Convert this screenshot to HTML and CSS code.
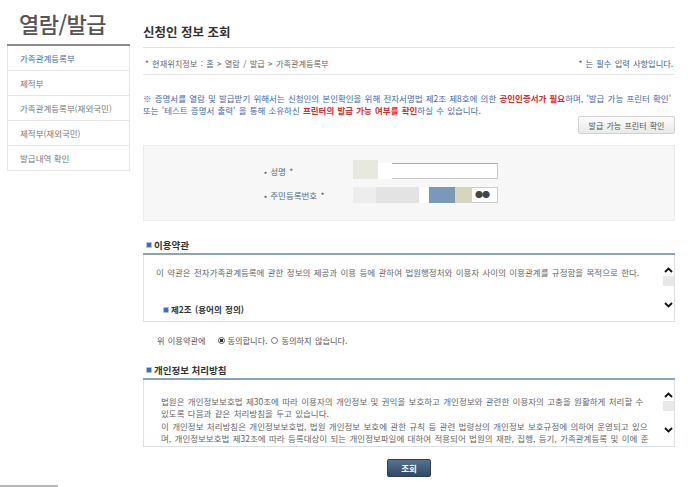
FILE: index.html
```html
<!DOCTYPE html>
<html lang="ko">
<head>
    <meta charset="UTF-8">
    <title>신청인 정보 조회</title>
    <link rel="stylesheet" href="styles.css">
</head>
<body>
<div class="page">
    <aside class="side">
        <h1 class="side-title">열람/발급</h1>
        <ul class="side-menu">
            <li class="on">가족관계등록부</li>
            <li>제적부</li>
            <li>가족관계등록부(재외국민)</li>
            <li>제적부(재외국민)</li>
            <li>발급내역 확인</li>
        </ul>
        <div class="side-foot"></div>
    </aside>

    <main class="content">
        <h2 class="page-title">신청인 정보 조회</h2>
        <div class="location">
            <span>* 현재위치정보 : 홈 &gt; 열람 / 발급 &gt; 가족관계등록부</span>
            <span class="req">* 는 필수 입력 사항입니다.</span>
        </div>

        <p class="notice">※ 증명서를 열람 및 발급받기 위해서는 신청인의 본인확인을 위해 전자서명법 제2조 제8호에 의한 <b>공인인증서가 필요</b>하며, '발급 가능 프린터 확인'<br>또는 '테스트 증명서 출력' 을 통해 소유하신 <b>프린터의 발급 가능 여부를 확인</b>하실 수 있습니다.</p>
        <div class="btn-row">
            <button class="btn-light" type="button">발급 가능 프린터 확인</button>
        </div>

        <div class="form-box">
            <div class="form-row">
                <label class="form-label">• 성명 *</label>
                <div class="field">
                    <span class="mask mask-green"></span>
                    <span class="mask mask-white"></span>
                    <span class="name-input"></span>
                </div>
            </div>
            <div class="form-row">
                <label class="form-label">• 주민등록번호 *</label>
                <div class="field">
                    <span class="mask mask-a"></span>
                    <span class="mask mask-b"></span>
                    <span class="mask mask-gap"></span>
                    <span class="mask mask-blue"></span>
                    <span class="mask mask-beige"></span>
                    <span class="pw-dots">●●</span>
                </div>
            </div>
        </div>

        <h3 class="sec-title"><span class="sec-icon"></span>이용약관</h3>
        <div class="scroll-box">
            <div class="scroll-text terms-one">
                <p>이 약관은 전자가족관계등록에 관한 정보의 제공과 이용 등에 관하여 법원행정처와 이용자 사이의 이용관계를 규정함을 목적으로 한다.</p>
                <h4 class="article"><span class="sec-icon small"></span>제2조 (용어의 정의)</h4>
            </div>
            <div class="scrollbar">
                <svg width="9" height="6" viewBox="0 0 9 6"><polyline points="1,5 4.5,1.5 8,5" fill="none" stroke="#111" stroke-width="1.9"/></svg>
                <span class="thumb"></span>
                <svg class="down" width="9" height="6" viewBox="0 0 9 6"><polyline points="1,1 4.5,4.5 8,1" fill="none" stroke="#111" stroke-width="1.9"/></svg>
            </div>
        </div>

        <div class="agree">
            <span class="agree-label">위 이용약관에</span>
            <span class="radio checked"></span><span>동의합니다.</span>
            <span class="radio"></span><span>동의하지 않습니다.</span>
        </div>

        <h3 class="sec-title"><span class="sec-icon"></span>개인정보 처리방침</h3>
        <div class="scroll-box">
            <div class="scroll-text terms-two">
                <p>법원은 개인정보보호법 제30조에 따라 이용자의 개인정보 및 권익을 보호하고 개인정보와 관련한 이용자의 고충을 원활하게 처리할 수<br>있도록 다음과 같은 처리방침을 두고 있습니다.<br>이 개인정보 처리방침은 개인정보보호법, 법원 개인정보 보호에 관한 규칙 등 관련 법령상의 개인정보 보호규정에 의하여 운영되고 있으<br>며, 개인정보보호법 제32조에 따라 등록대상이 되는 개인정보파일에 대하여 적용되어 법원의 재판, 집행, 등기, 가족관계등록 및 이에 준</p>
            </div>
            <div class="scrollbar">
                <svg width="9" height="6" viewBox="0 0 9 6"><polyline points="1,5 4.5,1.5 8,5" fill="none" stroke="#111" stroke-width="1.9"/></svg>
                <span class="thumb"></span>
                <svg class="down" width="9" height="6" viewBox="0 0 9 6"><polyline points="1,1 4.5,4.5 8,1" fill="none" stroke="#111" stroke-width="1.9"/></svg>
            </div>
        </div>

        <div class="submit-row">
            <button class="btn-dark" type="button">조회</button>
        </div>
    </main>
</div>
</body>
</html>
```

FILE: styles.css
```css
body {
    margin: 0;
    background-color: #fff;
    font-family: "Noto Sans CJK KR", "Noto Sans", sans-serif;
    font-size: 8.5px;
    color: #666;
}
.page {
    display: flex;
    height: 487px;
    overflow: hidden;
}

/* left menu */
.side {
    width: 143px;
    display: flex;
    flex-direction: column;
}
.side-title {
    margin: 0 0 0 7px;
    width: 123px;
    height: 46px;
    padding-top: 12px;
    padding-left: 12px;
    box-sizing: border-box;
    font-size: 22px;
    font-weight: 500;
    line-height: 22px;
    letter-spacing: -0.5px;
    color: #555;
    border-bottom: 2px solid #8c8c8c;
}
.side-menu {
    list-style: none;
    margin: 0 0 0 7px;
    padding: 0;
    width: 123px;
    border: 1px solid #e6e6e6;
    border-top: none;
    box-sizing: border-box;
}
.side-menu li {
    height: 24px;
    line-height: 25px;
    padding-left: 12px;
    border-bottom: 1px solid #e6e6e6;
    font-size: 8.5px;
    color: #777;
}
.side-menu li:last-child {
    border-bottom: none;
}
.side-menu li.on {
    color: #3c6aa8;
}
.side-foot {
    margin-top: auto;
    width: 58px;
    height: 2px;
    background-color: #b8b8b8;
}

/* content */
.content {
    width: 532px;
}
.page-title {
    margin: 0;
    padding-top: 24px;
    height: 23px;
    font-size: 12.5px;
    line-height: 16px;
    color: #333;
    border-bottom: 1px solid #e2e2e2;
}
.location {
    display: flex;
    justify-content: space-between;
    height: 27px;
    padding: 10px 2px 0;
    box-sizing: border-box;
    line-height: 11px;
    font-size: 8.2px;
    word-spacing: 1px;
    color: #666;
    border-bottom: 1px solid #e5e5e5;
}
.location .req {
    color: #3e5f8a;
}
.notice {
    margin: 18px 0 0;
    line-height: 11.5px;
    word-spacing: 0.8px;
    color: #3d67b5;
    white-space: nowrap;
}
.notice b {
    color: #e5262b;
}
.btn-row {
    display: flex;
    justify-content: flex-end;
}
.btn-light {
    width: 97px;
    height: 18px;
    padding: 0;
    font-family: inherit;
    font-size: 8px;
    word-spacing: 1px;
    color: #555;
    background: linear-gradient(#fcfcfc, #e9e9e9);
    border: 1px solid #d2d2d2;
    border-radius: 2px;
}

/* form */
.form-box {
    margin-top: 11px;
    padding: 17px 0;
    background-color: #f7f7f7;
    border: 1px solid #ececec;
    display: flex;
    flex-direction: column;
    gap: 8px;
}
.form-row {
    display: flex;
    align-items: center;
    height: 16px;
}
.form-label {
    width: 89px;
    margin-left: 120px;
    color: #4d6b8a;
    word-spacing: 1px;
}
.field {
    display: flex;
    height: 16px;
    width: 145px;
}
.mask {
    height: 100%;
}
.mask-green {
    width: 25px;
    height: 19px;
    margin-top: -3px;
    background-color: #e7e9e1;
}
.mask-white {
    width: 14px;
    background-color: #fff;
}
.name-input {
    flex: 1;
    background-color: #fff;
    border: 1px solid #c9c9c9;
    border-top-color: #a9a9a9;
    border-left: none;
}
.mask-a {
    width: 23px;
    background-color: #ededed;
}
.mask-b {
    width: 43px;
    background-color: #e3e3e3;
}
.mask-gap {
    width: 10px;
    background-color: #fff;
}
.mask-blue {
    width: 26px;
    background-color: #7a99b9;
}
.mask-beige {
    width: 17px;
    background-color: #d7d5be;
}
.pw-dots {
    flex: 1;
    background-color: #fff;
    border: 1px solid #ccc;
    border-left: none;
    font-size: 8px;
    line-height: 14px;
    padding-left: 3px;
    letter-spacing: -1px;
    color: #444;
}

/* terms */
.sec-title {
    margin: 18px 0 0;
    padding: 0 0 2px 3px;
    display: flex;
    align-items: center;
    gap: 2px;
    font-size: 9.5px;
    line-height: 12px;
    color: #333;
    border-bottom: 2px solid #8aa3bf;
}
.sec-icon {
    display: inline-block;
    width: 6px;
    height: 6px;
    background-color: #3f6fb2;
    border: 1px solid #a9c0de;
    box-sizing: border-box;
    border-radius: 1px;
}
.sec-icon.small {
    margin-right: 2px;
}
.scroll-box {
    display: flex;
    border: 1px solid #dbe0e6;
    border-top: none;
}
.scroll-text {
    flex: 1;
    overflow: hidden;
    line-height: 12.4px;
    word-spacing: 1px;
    color: #666;
    white-space: nowrap;
}
.scroll-text p {
    margin: 0;
}
.terms-one {
    height: 66px;
    padding: 11px 0 0 12px;
    box-sizing: border-box;
}
.terms-two {
    height: 66px;
    padding: 15px 0 0 17px;
    box-sizing: border-box;
}
.article {
    margin: 25px 0 0 7px;
    display: flex;
    align-items: center;
    font-size: 8.5px;
    color: #333;
}
.scrollbar {
    width: 11px;
    display: flex;
    flex-direction: column;
    align-items: center;
    padding: 12px 0 13px;
    box-sizing: border-box;
}
.scrollbar .thumb {
    width: 11px;
    height: 10px;
    margin-top: 3px;
    background-color: #e8e8e8;
}
.scrollbar .down {
    margin-top: auto;
}
.agree {
    margin-top: 12px;
    padding-left: 14px;
    display: flex;
    align-items: center;
    height: 12px;
    font-size: 8.2px;
    word-spacing: 1px;
    color: #555;
}
.agree-label {
    margin-right: 8px;
}
.radio {
    width: 7px;
    height: 7px;
    margin: 0 3px 0 4px;
    border: 1px solid #777;
    border-radius: 50%;
    box-sizing: border-box;
    background-color: #fff;
}
.radio.checked {
    background: radial-gradient(#333 0 1.6px, #fff 2px);
    border-color: #555;
}
.submit-row {
    margin-top: 12px;
    display: flex;
    justify-content: center;
}
.btn-dark {
    width: 44px;
    height: 18px;
    padding: 0;
    font-family: inherit;
    font-size: 8.5px;
    font-weight: bold;
    color: #fff;
    background: linear-gradient(#57718f, #2f4966);
    border: 1px solid #2c3f55;
    border-radius: 2px;
}
```
